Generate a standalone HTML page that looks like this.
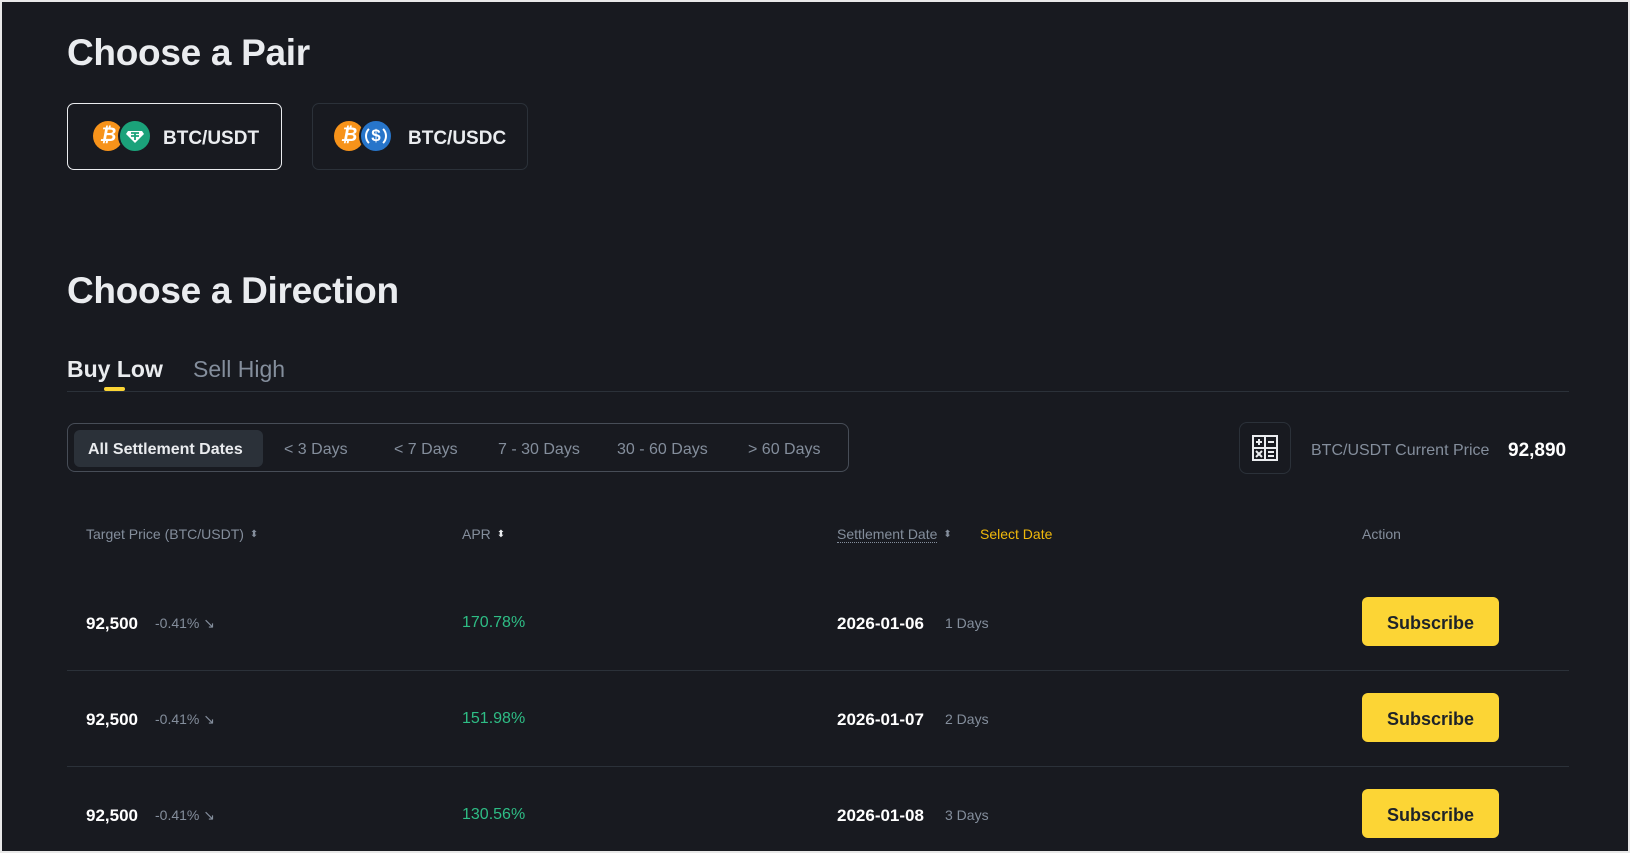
<!DOCTYPE html>
<html><head><meta charset="utf-8"><style>
*{margin:0;padding:0;box-sizing:border-box}
body{width:1630px;height:853px;background:#e8e8e8;font-family:"Liberation Sans",sans-serif;overflow:hidden;position:relative}
#m{position:absolute;left:2px;top:2px;width:1626px;height:849px;background:#181a20;color:#eaecef}
.a{position:absolute;white-space:nowrap}
h1{position:absolute;font-size:37px;font-weight:bold;color:#eaecef;left:65px;letter-spacing:-.3px}
.pair{position:absolute;top:101px;height:67px;border-radius:7px;border:1px solid #2b3139;font-size:19px;font-weight:bold}
.pair span{position:absolute;left:95px;top:24px}
.c{position:absolute;width:30px;height:30px;border-radius:50%;top:17px}
.f{position:absolute;top:421px;left:65px;width:782px;height:49px;border:1px solid #474d57;border-radius:8px}
.f .a{top:17px;font-size:16px;color:#848e9c}
.hd{top:524px;font-size:14px;color:#848e9c}
.row .a{font-size:16px}
.b{position:absolute;left:1360px;width:137px;height:49px;background:#fcd535;border-radius:6px;color:#1e2329;font-size:18px;font-weight:bold;text-align:center;line-height:53px}
.ln{position:absolute;left:65px;width:1502px;height:1px;background:#2b3139}
.arr{display:inline-block;margin-left:6px;font-size:10px;vertical-align:2px;color:#848e9c}
</style></head><body><div id="m">
<h1 style="top:30px">Choose a Pair</h1>
<div class="pair" style="left:65px;width:215px;border-color:#eaecef">
<div class="c" style="left:25px;background:#f7931a;color:#fff;font-size:19px;font-weight:bold;text-align:center;line-height:30px;font-style:italic">₿</div>
<div class="c" style="left:50px;background:#1ba27a;border:2px solid #181a20;width:34px;height:34px;top:15px"><svg width="30" height="30" viewBox="0 0 30 30"><path d="M8 10h14l2 3-9 9-9-9z" fill="#fff"/><path d="M11 12h8M15 12v7M11 15h8" stroke="#1ba27a" stroke-width="1.8"/></svg></div>
<span>BTC/USDT</span></div>
<div class="pair" style="left:310px;width:216px">
<div class="c" style="left:21px;background:#f7931a;color:#fff;font-size:19px;font-weight:bold;text-align:center;line-height:30px;font-style:italic">₿</div>
<div class="c" style="left:46px;background:#2775ca;border:2px solid #181a20;width:34px;height:34px;top:15px;color:#fff;text-align:center;line-height:29px;font-size:17px;font-weight:bold"><div style="position:absolute;left:4px;top:4px;width:22px;height:22px;border:2px solid #fff;border-radius:50%;border-top-color:transparent;border-bottom-color:transparent"></div>$</div>
<span>BTC/USDC</span></div>
<h1 style="top:268px">Choose a Direction</h1>
<div class="a" style="left:65px;top:354px;font-size:23px;font-weight:bold;color:#eaecef">Buy Low</div>
<div class="a" style="left:191px;top:354px;font-size:23px;color:#848e9c">Sell High</div>
<div class="a" style="left:102px;top:385px;width:21px;height:4px;background:#fcd535;border-radius:2px"></div>
<div class="ln" style="top:389px"></div>
<div class="f">
<div class="a" style="left:6px;top:6px;width:189px;height:37px;background:#2b3139;border-radius:6px"></div>
<div class="a" style="left:20px;color:#eaecef;font-weight:bold">All Settlement Dates</div>
<div class="a" style="left:216px">&lt; 3 Days</div>
<div class="a" style="left:326px">&lt; 7 Days</div>
<div class="a" style="left:430px">7 - 30 Days</div>
<div class="a" style="left:549px">30 - 60 Days</div>
<div class="a" style="left:680px">&gt; 60 Days</div>
</div>
<div class="a" style="left:1237px;top:420px;width:52px;height:52px;border:1px solid #2b3139;border-radius:8px"><svg width="50" height="50" viewBox="0 0 50 50"><rect x="13" y="13" width="24" height="24" fill="none" stroke="#eaecef" stroke-width="2"/><path d="M25 13v24M13 25h24M16 19h6M19 16v6M28 19h6M16 28l6 6M22 28l-6 6M28 29h6M28 33h6" stroke="#eaecef" stroke-width="2"/></svg></div>
<div class="a" style="left:1309px;top:440px;font-size:16px;color:#848e9c">BTC/USDT Current Price</div>
<div class="a" style="left:1506px;top:438px;font-size:19px;font-weight:bold;color:#fff">92,890</div>
<div class="a hd" style="left:84px">Target Price (BTC/USDT)<span class="arr">⬍</span></div>
<div class="a hd" style="left:460px">APR<span class="arr" style="color:#eaecef">⬍</span></div>
<div class="a hd" style="left:835px"><span style="border-bottom:1px dotted #848e9c">Settlement Date</span><span class="arr">⬍</span></div>
<div class="a hd" style="left:978px;color:#f0b90b">Select Date</div>
<div class="a hd" style="left:1360px">Action</div>

<div class="row">
<div class="a" style="left:84px;top:612px;font-weight:bold;color:#fff;font-size:17px">92,500</div>
<div class="a" style="left:153px;top:613px;font-size:14px;color:#848e9c">-0.41% ↘</div>
<div class="a" style="left:460px;top:612px;color:#2ebd85">170.78%</div>
<div class="a" style="left:835px;top:612px;font-weight:bold;color:#fff;font-size:17px">2026-01-06</div>
<div class="a" style="left:943px;top:613px;font-size:14px;color:#848e9c">1 Days</div>
<div class="b" style="top:595px">Subscribe</div>
</div>
<div class="ln" style="top:668px"></div>
<div class="row">
<div class="a" style="left:84px;top:708px;font-weight:bold;color:#fff;font-size:17px">92,500</div>
<div class="a" style="left:153px;top:709px;font-size:14px;color:#848e9c">-0.41% ↘</div>
<div class="a" style="left:460px;top:708px;color:#2ebd85">151.98%</div>
<div class="a" style="left:835px;top:708px;font-weight:bold;color:#fff;font-size:17px">2026-01-07</div>
<div class="a" style="left:943px;top:709px;font-size:14px;color:#848e9c">2 Days</div>
<div class="b" style="top:691px">Subscribe</div>
</div>
<div class="ln" style="top:764px"></div>
<div class="row">
<div class="a" style="left:84px;top:804px;font-weight:bold;color:#fff;font-size:17px">92,500</div>
<div class="a" style="left:153px;top:805px;font-size:14px;color:#848e9c">-0.41% ↘</div>
<div class="a" style="left:460px;top:804px;color:#2ebd85">130.56%</div>
<div class="a" style="left:835px;top:804px;font-weight:bold;color:#fff;font-size:17px">2026-01-08</div>
<div class="a" style="left:943px;top:805px;font-size:14px;color:#848e9c">3 Days</div>
<div class="b" style="top:787px">Subscribe</div>
</div>
</div>
</body></html>
